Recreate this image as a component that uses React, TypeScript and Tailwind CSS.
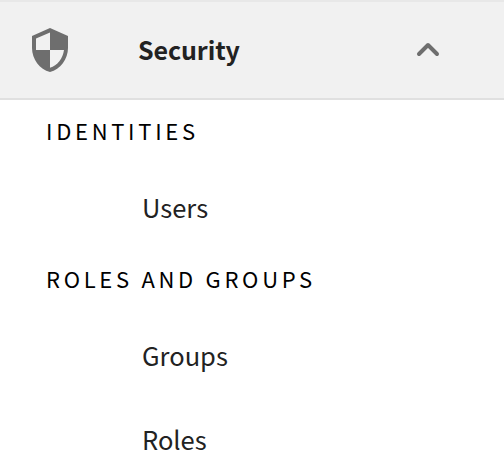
import React from "react";

function Item({ label, className }: { label: string; className: string }) {
  return (
    <a className={`flex items-center pl-[142px] text-[25.5px] leading-none text-[#222] ${className}`}>{label}</a>
  );
}

function Heading({ label }: { label: string }) {
  return <div className="h-8 pl-[46px] text-[22px] leading-8 tracking-[3.7px] text-black">{label}</div>;
}

export default function App() {
  return (
    <div className="h-[474px] w-[504px] overflow-hidden bg-white font-['Noto_Sans_CJK_SC',sans-serif]">
      <button className="flex h-[100px] w-full items-center border-y-2 border-t-[#e8e8e8] border-b-[#e0e0e0] bg-[#f1f1f1] text-left">
        <svg className="ml-[26px] size-12" viewBox="0 0 24 24" fill="#6e6e6e">
          <path d="M12 1 3 5v6c0 5.550 3.840 10.740 9 12 5.160-1.260 9-6.450 9-12V5l-9-4zm0 10.990h7c-.53 4.120-3.280 7.790-7 8.940V12H5V6.300l7-3.110v8.800z" />
        </svg>
        <span className="ml-[64px] w-[254px] pb-px text-[25px] font-bold leading-none tracking-[-0.1px] text-[#222]">
          Security
        </span>
        <svg className="ml-6 size-6" viewBox="0 0 24 24" fill="none" stroke="#6e6e6e" strokeWidth="4" strokeLinecap="round" strokeLinejoin="round">
          <path d="M3 16 12 7l9 9" />
        </svg>
      </button>
      <div className="pt-[14px]">
        <Heading label="IDENTITIES" />
        <Item label="Users" className="h-[122px]" />
      </div>
      <div className="-mt-1.5">
        <Heading label="ROLES AND GROUPS" />
        <Item label="Groups" className="h-[122px]" />
        <Item label="Roles" className="h-[46px]" />
      </div>
    </div>
  );
}
